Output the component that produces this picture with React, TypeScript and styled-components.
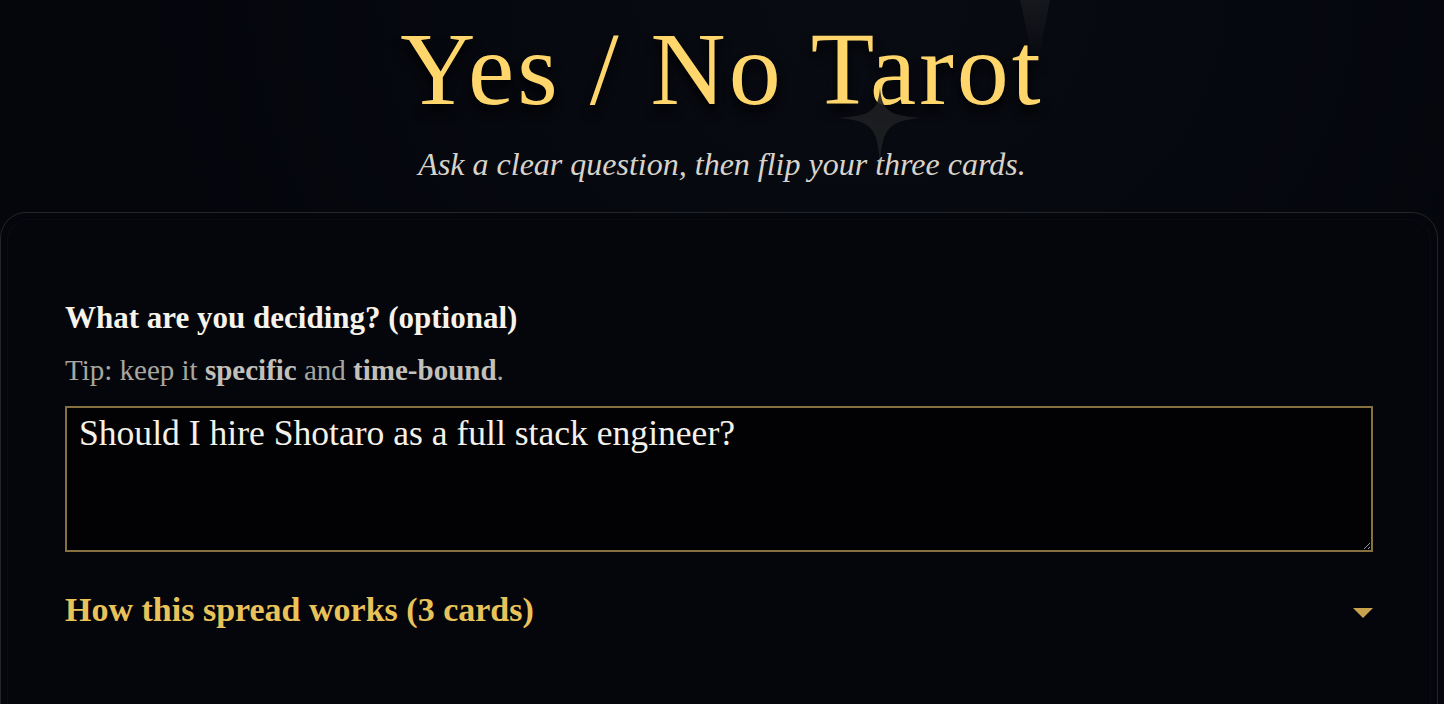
import styled, { createGlobalStyle } from 'styled-components'

const GlobalStyle = createGlobalStyle`
  html, body {
    margin: 0;
    padding: 0;
    background: #04060c;
    overflow: hidden;
  }
  * {
    box-sizing: border-box;
  }
`

const serif = `"Liberation Serif", "DejaVu Serif", serif`

const Page = styled.main`
  position: relative;
  height: 100vh;
  background: radial-gradient(ellipse at 60% 0%, #090b12 0%, #04060c 60%);
  font-family: ${serif};
  overflow: hidden;
`

const Header = styled.header`
  position: relative;
  text-align: center;
  padding-top: 12px;
`

const Title = styled.h1`
  margin: 0;
  font-family: ${serif};
  font-weight: 400;
  font-size: 104px;
  line-height: 1.1;
  letter-spacing: 3px;
  color: #ffd66b;
  text-shadow: 0 8px 10px rgba(0, 0, 0, 0.9);
`

const Subtitle = styled.p`
  margin: 20px 0 0;
  font-style: italic;
  font-size: 32px;
  color: #d7d3cb;
`

const Sparkle = styled.svg`
  position: absolute;
  left: 838px;
  top: 88px;
  width: 84px;
  height: 74px;
  pointer-events: none;
`

const Beam = styled.div`
  position: absolute;
  left: 1020px;
  top: 0;
  width: 30px;
  height: 62px;
  background: linear-gradient(180deg, rgba(55, 55, 55, 0.3), rgba(30, 30, 30, 0));
  clip-path: polygon(0 0, 100% 0, 60% 100%, 45% 100%);
  pointer-events: none;
`

const Card = styled.section`
  position: relative;
  width: 1438px;
  margin-top: 29px;
  border: 1px solid #242527;
  border-radius: 26px;
  background: #04060c;
  padding: 87px 64px 120px;

  &::before {
    content: '';
    position: absolute;
    inset: 6px;
    border-radius: 22px;
    border: 1px dotted rgba(60, 66, 80, 0.22);
    pointer-events: none;
  }
`

const Label = styled.label`
  display: block;
  font-weight: 700;
  font-size: 31px;
  color: #f7f3ea;
`

const Tip = styled.p`
  margin: 18px 0 0;
  font-size: 29px;
  line-height: 32px;
  color: #a9a6a0;

  strong {
    color: #c3c0ba;
  }
`

const Question = styled.textarea`
  display: block;
  width: 100%;
  height: 146px;
  margin-top: 20px;
  padding: 4px 12px;
  border: 2px solid #86703f;
  background: #020205;
  color: #f4f1ea;
  font-family: ${serif};
  font-size: 35.6px;
  resize: vertical;
  outline: none;
`

const Summary = styled.div`
  display: flex;
  align-items: center;
  justify-content: space-between;
  margin-top: 39px;
  font-weight: 700;
  font-size: 34px;
  color: #e9c35a;
`

const Caret = styled.span`
  width: 0;
  height: 0;
  margin-top: 6px;
  border-left: 10px solid transparent;
  border-right: 10px solid transparent;
  border-top: 10px solid #c9a24e;
`

export default function App() {
  return (
    <Page>
      <GlobalStyle />
      <Beam />
      <Header>
        <Title>Yes / No Tarot</Title>
        <Subtitle>Ask a clear question, then flip your three cards.</Subtitle>
        <Sparkle viewBox="0 0 84 74">
          <path
            d="M42 0 C44 22 50 28 84 30 C50 33 45 40 42 74 C39 40 34 33 0 30 C34 28 40 22 42 0 Z"
            fill="#1e1f22"
            opacity="0.9"
          />
        </Sparkle>
      </Header>
      <Card>
        <Label htmlFor="question">What are you deciding? (optional)</Label>
        <Tip>
          Tip: keep it <strong>specific</strong> and <strong>time-bound</strong>.
        </Tip>
        <Question id="question" defaultValue="Should I hire Shotaro as a full stack engineer?" />
        <Summary>
          How this spread works (3 cards)
          <Caret />
        </Summary>
      </Card>
    </Page>
  )
}
